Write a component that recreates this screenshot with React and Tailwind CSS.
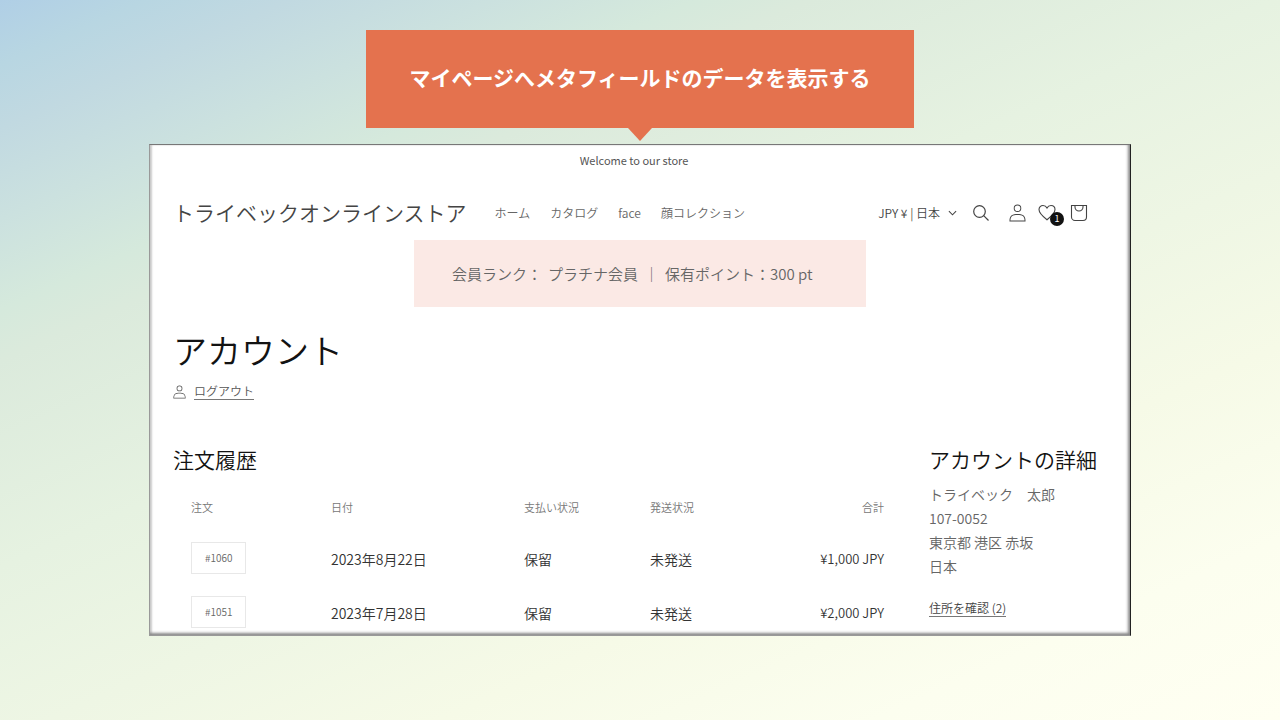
const font = "font-['Noto_Sans_CJK_JP','Noto_Sans',sans-serif]";

const navLinks = ["ホーム", "カタログ", "face", "顔コレクション"];

const orders = [
  { id: "#1060", date: "2023年8月22日", payment: "保留", fulfillment: "未発送", total: "¥1,000 JPY" },
  { id: "#1051", date: "2023年7月28日", payment: "保留", fulfillment: "未発送", total: "¥2,000 JPY" },
];

const address = ["トライベック　太郎", "107-0052", "東京都 港区 赤坂", "日本"];

function AccountIcon({ className }) {
  return (
    <svg viewBox="0 0 18 19" fill="currentColor" aria-hidden="true" className={className}>
      <path
        fillRule="evenodd"
        d="M6 4.5a3 3 0 116 0 3 3 0 01-6 0zm3-4a4 4 0 100 8 4 4 0 000-8zm5.58 12.15c1.12.82 1.83 2.24 1.91 4.85H1.51c.08-2.6.79-4.03 1.9-4.85C4.66 11.75 6.5 11.5 9 11.5s4.35.26 5.58 1.15zM9 10.5c-2.5 0-4.65.24-6.17 1.35C1.27 12.98.5 14.93.5 18v.5h17V18c0-3.07-.77-5.02-2.33-6.15-1.52-1.1-3.67-1.35-6.17-1.35z"
      />
    </svg>
  );
}

function SearchIcon() {
  return (
    <svg viewBox="0 0 18 18" fill="none" stroke="currentColor" strokeWidth="1.2" aria-hidden="true" className="size-[18px]">
      <circle cx="7.5" cy="7.5" r="5.8" />
      <path d="M11.7 11.7l4.8 4.8" />
    </svg>
  );
}

function HeartIcon() {
  return (
    <svg viewBox="0 0 18 18" fill="none" stroke="currentColor" strokeWidth="1.1" aria-hidden="true" className="size-[18px]">
      <path d="M9 15.8C5.2 12.8 1 9.6 1 5.6C1 3.2 2.8 1.500 5 1.500c1.700 0 3.200 1 4 2.600c.8-1.600 2.300-2.600 4-2.600c2.200 0 4 1.700 4 4.100C17 9.600 12.800 12.800 9 15.800z" />
    </svg>
  );
}

function BagIcon() {
  return (
    <svg viewBox="0 0 18 18" fill="none" stroke="currentColor" strokeWidth="1.1" aria-hidden="true" className="size-[18px]">
      <path d="M1.5 1.5h15v11.500a3.500 3.500 0 01-3.500 3.500H5a3.500 3.500 0 01-3.500-3.500z" />
      <path d="M5 1.500v1.500a4 4 0 008 0V1.500" />
    </svg>
  );
}

function StoreHeader() {
  return (
    <header className="flex h-[63px] items-center pt-2 pr-3 text-[#444444]">
      <a href="#" className="text-[21px] font-[350] whitespace-nowrap">
        トライベックオンラインストア
      </a>
      <nav className="ml-7 flex gap-5 text-xs font-[350] whitespace-nowrap text-[#666666]">
        {navLinks.map((link) => (
          <a key={link} href="#">
            {link}
          </a>
        ))}
      </nav>
      <div className="ml-auto flex items-center">
        <button type="button" className="mr-2 flex items-center gap-2 text-xs font-[350] whitespace-nowrap">
          JPY ¥ | 日本
          <svg viewBox="0 0 10 6" fill="none" stroke="currentColor" strokeWidth="1.2" aria-hidden="true" className="h-[6px] w-[9px]">
            <path d="M1 1l4 4 4-4" />
          </svg>
        </button>
        <button type="button" aria-label="検索" className="mr-1 flex size-8 items-center justify-center">
          <SearchIcon />
        </button>
        <a href="#" aria-label="アカウント" className="flex size-8 items-center justify-center">
          <AccountIcon className="h-[18px] w-[17px]" />
        </a>
        <a href="#" aria-label="お気に入り" className="relative flex h-8 w-7 items-center justify-center">
          <HeartIcon />
          <span className="absolute right-[-3px] bottom-[3px] flex size-[14px] items-center justify-center rounded-full bg-[#121212] text-[9px] text-white">
            1
          </span>
        </a>
        <a href="#" aria-label="カート" className="ml-[2px] flex size-8 items-center justify-center">
          <BagIcon />
        </a>
      </div>
    </header>
  );
}

function OrderHistory() {
  return (
    <section className="flex-1">
      <h2 className="text-[21px] leading-7 font-[350] text-[#121212]">注文履歴</h2>
      <table className="mt-[21px] w-full table-fixed text-left font-[350] text-[#333333]">
        <thead>
          <tr className="h-[26px] text-[11px] text-[#777777]">
            <th className="w-[140px] pl-[18px] font-[350]">注文</th>
            <th className="w-[193px] pl-[18px] font-[350]">日付</th>
            <th className="w-[126px] pl-[18px] font-[350]">支払い状況</th>
            <th className="w-[130px] pl-[18px] font-[350]">発送状況</th>
            <th className="pr-[18px] text-right font-[350]">合計</th>
          </tr>
        </thead>
        <tbody>
          {orders.map((order) => (
            <tr key={order.id} className="text-sm">
              <td className="pt-[22px] pl-[18px]">
                <a href="#" className="flex h-8 w-fit items-center border border-[#e8e8e8] px-[13px] text-[10px] text-[#666666]">
                  {order.id}
                </a>
              </td>
              <td className="pt-6 pl-[18px]">{order.date}</td>
              <td className="pt-6 pl-[18px]">{order.payment}</td>
              <td className="pt-6 pl-[18px]">{order.fulfillment}</td>
              <td className="pt-6 pr-[18px] text-right text-[13px]">{order.total}</td>
            </tr>
          ))}
        </tbody>
      </table>
    </section>
  );
}

function AccountDetails() {
  return (
    <section className="w-[178px] shrink-0 font-[350]">
      <h2 className="text-[21px] leading-7 whitespace-nowrap text-[#121212]">アカウントの詳細</h2>
      <address className="mt-[9px] text-sm leading-6 text-[#666666] not-italic">
        {address.map((line) => (
          <p key={line}>{line}</p>
        ))}
      </address>
      <a href="#" className="mt-[22px] inline-block border-b border-[#777777] text-xs leading-4 text-[#444444]">
        住所を確認 (2)
      </a>
    </section>
  );
}

export default function App() {
  return (
    <main
      className={`flex min-h-screen flex-col items-center bg-[linear-gradient(156deg,#b0cfe6_0%,#b8d6e2_5%,#c1d9e1_10%,#cbe1df_17%,#d5e9dc_24%,#dbeadc_28%,#e6f2e1_44%,#f6fae7_71%,#fcfeef_86%,#fffff2_100%)] px-8 pt-[30px] pb-8 ${font}`}
    >
      <h1 className="relative w-full max-w-[548px] bg-[#e4724e] px-6 pt-[30px] pb-[34px] text-center text-[21px] leading-[34px] font-bold text-white">
        マイページへメタフィールドのデータを表示する
        <svg viewBox="0 0 24 13" fill="#e4724e" aria-hidden="true" className="absolute top-full left-1/2 h-[13px] w-6 -translate-x-1/2">
          <path d="M0 0h24L12 13z" />
        </svg>
      </h1>

      <div className="mt-4 w-full max-w-[982px] border border-t-[#777777] border-r-[#222222] border-b-[#999999] border-l-[#999999] bg-white px-[23px] pb-[7px] shadow-[inset_-2px_-2px_3px_#888888,inset_2px_0_2px_#cccccc]">
        <p className="h-8 pr-3 text-center text-[11px] leading-[30px] text-[#555555]">Welcome to our store</p>
        <StoreHeader />

        <p className="mx-auto flex w-full max-w-[452px] gap-[6px] bg-[#fbe9e5] px-[38px] py-5 text-[15px] leading-[27px] font-[350] whitespace-nowrap text-[#666666]">
          <span>会員ランク：</span>
          <span>プラチナ会員</span>
          <span>｜</span>
          <span>保有ポイント：300 pt</span>
        </p>

        <h2 className="mt-[19px] text-[34px] leading-[48px] font-[350] text-[#121212]">アカウント</h2>
        <a href="#" className="mt-[9px] flex w-fit items-center gap-2 text-xs font-[350] text-[#555555]">
          <AccountIcon className="h-[14px] w-[13px]" />
          <span className="border-b border-[#777777] leading-4">ログアウト</span>
        </a>

        <div className="mt-[45px] flex gap-[27px]">
          <OrderHistory />
          <AccountDetails />
        </div>
      </div>
    </main>
  );
}
